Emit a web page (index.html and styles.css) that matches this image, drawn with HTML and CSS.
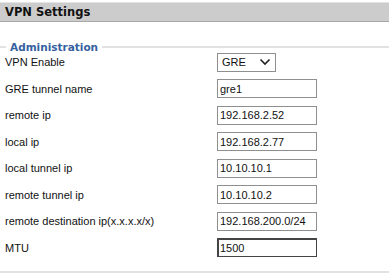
FILE: index.html
```html
<!DOCTYPE html>
<html lang="en">
<head>
    <meta charset="UTF-8">
    <title>VPN Settings</title>
    <link rel="stylesheet" href="styles.css">
</head>
<body>
    <div class="title-bar">VPN Settings</div>

    <fieldset class="group">
        <legend>Administration</legend>
        <table class="form-table">
            <tr>
                <td class="label">VPN Enable</td>
                <td>
                    <div class="select-box">
                        <span>GRE</span>
                        <svg width="12" height="8" viewBox="0 0 12 8"><path d="M1.5 1.5 L6 6 L10.5 1.5" fill="none" stroke="#222" stroke-width="1.6"/></svg>
                    </div>
                </td>
            </tr>
            <tr>
                <td class="label">GRE tunnel name</td>
                <td><input type="text" value="gre1"></td>
            </tr>
            <tr>
                <td class="label">remote ip</td>
                <td><input type="text" value="192.168.2.52"></td>
            </tr>
            <tr>
                <td class="label">local ip</td>
                <td><input type="text" value="192.168.2.77"></td>
            </tr>
            <tr>
                <td class="label">local tunnel ip</td>
                <td><input type="text" value="10.10.10.1"></td>
            </tr>
            <tr>
                <td class="label">remote tunnel ip</td>
                <td><input type="text" value="10.10.10.2"></td>
            </tr>
            <tr>
                <td class="label">remote destination ip(x.x.x.x/x)</td>
                <td><input type="text" value="192.168.200.0/24"></td>
            </tr>
            <tr>
                <td class="label">MTU</td>
                <td><input type="text" class="active" value="1500"></td>
            </tr>
        </table>
    </fieldset>
</body>
</html>
```

FILE: styles.css
```css
body {
    margin: 0;
    padding: 0;
    background: #fff;
    font-family: "Liberation Sans", Arial, sans-serif;
    font-size: 11px;
    color: #111;
}
.title-bar {
    margin-top: 2px;
    border-top: 1px solid #e4e4e4;
    background: #cccccc;
    border-bottom: 1px solid #a8a8a8;
    height: 18px;
    line-height: 18px;
    padding-left: 5px;
    font-family: "DejaVu Sans", Verdana, sans-serif;
    font-weight: bold;
    font-size: 11.5px;
    color: #111;
}
.group {
    margin: 19px 0 0 0;
    padding: 0 0 10px 0;
    border: none;
    border-top: 2px solid #e2e2e2;
    border-bottom: 2px solid #e2e2e2;
}
.group legend {
    margin-left: 6px;
    padding: 0 4px;
    font-family: "DejaVu Sans", Verdana, sans-serif;
    font-weight: bold;
    font-size: 10.5px;
    color: #35619f;
}
.form-table {
    border-collapse: collapse;
    margin-top: -4px;
}
.form-table td {
    padding: 0;
    height: 26.5px;
    vertical-align: middle;
}
.form-table .label {
    width: 212px;
    padding: 1px 0 1px 5px;
    height: 24.5px;
}
input[type="text"] {
    box-sizing: border-box;
    width: 100px;
    height: 19px;
    margin: 0;
    padding: 0 2px;
    border: 1px solid #8f8f8f;
    font-family: "Liberation Sans", Arial, sans-serif;
    font-size: 11px;
    color: #111;
}
input.active {
    border: 1px solid #444;
    border-top-width: 2px;
    border-left-width: 2px;
    padding-left: 1px;
}
.select-box {
    box-sizing: border-box;
    width: 59px;
    height: 19px;
    border: 1px solid #8f8f8f;
    display: flex;
    align-items: center;
    justify-content: space-between;
    padding: 0 4px 0 4px;
}
```
